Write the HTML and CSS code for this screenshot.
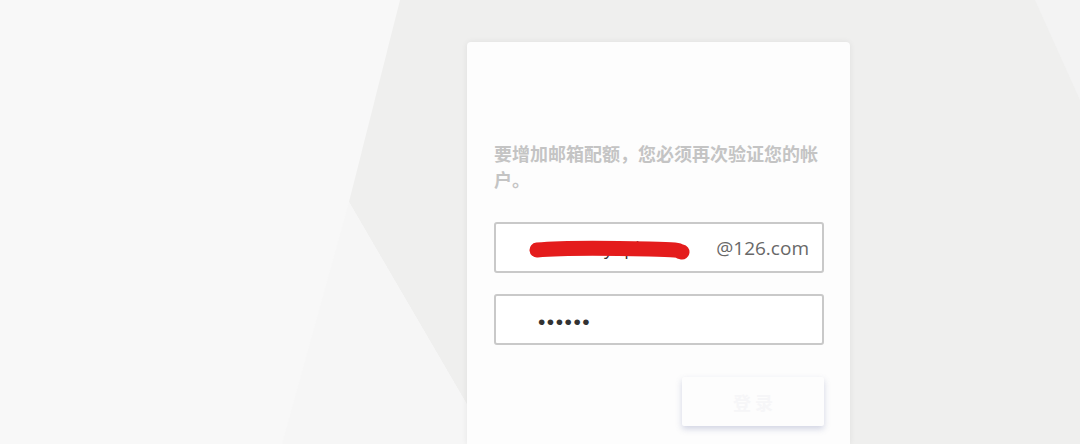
FILE: index.html
```html
<!DOCTYPE html>
<html lang="zh-CN">

<head>
    <meta charset="UTF-8">
    <meta name="viewport" content="width=device-width, initial-scale=1.0">
    <title>邮箱验证</title>
    <link rel="stylesheet" href="styles.css">
</head>

<body>
    <svg class="backdrop" width="1080" height="444" viewBox="0 0 1080 444">
        <polygon points="0,0 400,0 349,202 490,444 0,444" fill="#f8f8f8" />
        <polygon points="349,202 490,444 282,444" fill="#f6f6f6" />
        <polygon points="1035,0 1080,0 1080,100" fill="#f3f3f3" />
    </svg>

    <div class="page">
        <div class="login-card">
            <p class="notice">要增加邮箱配额，您必须再次验证您的帐户。</p>

            <div class="field">
                <span class="account">
                    <span class="account-text">hanyupk</span>
                    <svg class="scribble" width="170" height="26" viewBox="0 0 170 26">
                        <path d="M8 12 C 40 9, 80 10, 120 11 S 146 13, 153 14" stroke="#e41c1c" stroke-width="15" stroke-linecap="round" fill="none" />
                    </svg>
                </span>
                <span class="domain">@126.com</span>
            </div>

            <div class="field">
                <span class="password">••••••</span>
            </div>

            <div class="actions">
                <button class="submit">登 录</button>
            </div>
        </div>
    </div>
</body>

</html>
```

FILE: styles.css
```css
body {
    margin: 0;
    background-color: #efefee;
    font-family: "Noto Sans CJK SC", "Noto Sans", sans-serif;
    overflow: hidden;
    height: 444px;
}

.backdrop {
    position: absolute;
    top: 0;
    left: 0;
}

.page {
    position: relative;
    padding: 42px 0 0 467px;
}

.login-card {
    width: 330px;
    height: 304px;
    padding: 98px 26px 0 27px;
    background: #fdfdfd;
    border-radius: 4px 4px 0 0;
    box-shadow: 0 0 6px rgba(0, 0, 0, 0.07);
}

.notice {
    margin: 0 0 30px;
    font-size: 18px;
    line-height: 26px;
    font-weight: bold;
    color: #c4c4c4;
}

.field {
    height: 47px;
    border: 2px solid #c9c9c9;
    border-radius: 3px;
    background: #fff;
    display: flex;
    align-items: center;
    justify-content: space-between;
    padding: 0 13px 0 36px;
    margin-bottom: 21px;
}

.account {
    position: relative;
    font-family: "Open Sans", sans-serif;
    font-size: 18px;
    color: #333;
}

.account-text {
    padding-left: 40px;
}

.scribble {
    position: absolute;
    left: -3px;
    top: 2px;
}

.domain {
    font-family: "Open Sans", sans-serif;
    font-size: 19px;
    color: #686868;
}

.password {
    padding-left: 6px;
    font-family: "Liberation Sans", sans-serif;
    font-size: 21px;
    letter-spacing: 1.5px;
    color: #333;
    margin-top: 5px;
}

.actions {
    display: flex;
    justify-content: flex-end;
    padding-top: 11px;
}

.submit {
    width: 142px;
    height: 49px;
    border: none;
    border-radius: 2px;
    background: #fdfdfd;
    box-shadow: 0 3px 6px rgba(110, 120, 170, 0.3);
    font-family: "Noto Sans CJK SC", sans-serif;
    font-size: 18px;
    font-weight: bold;
    color: #f6f6f8;
}
```
